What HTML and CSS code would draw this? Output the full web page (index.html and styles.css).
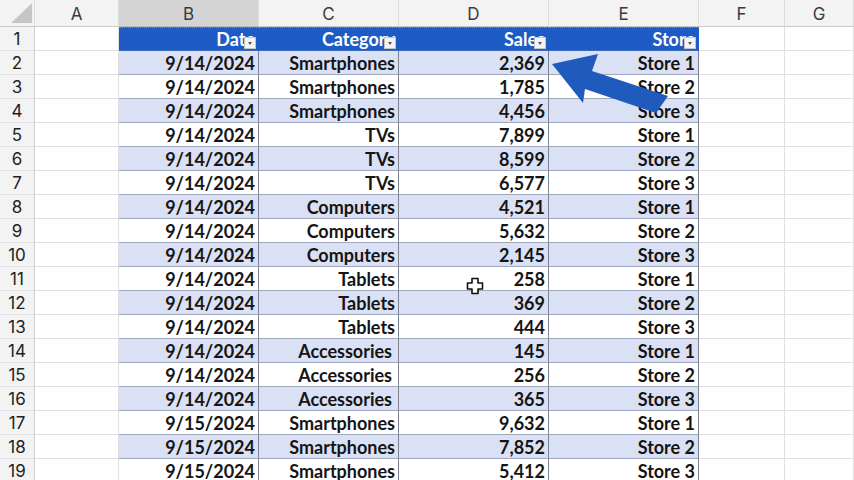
FILE: index.html
```html
<!DOCTYPE html>
<html>
<head>
<meta charset="utf-8">
<link rel="stylesheet" href="styles.css">
</head>
<body>
<div class="sheet">
  <div class="row colhead">
    <div class="corner"><span class="tri"></span></div>
    <div class="ch">A</div>
    <div class="ch sel">B</div>
    <div class="ch">C</div>
    <div class="ch">D</div>
    <div class="ch">E</div>
    <div class="ch">F</div>
    <div class="ch">G</div>
  </div>
  <div class="row">
    <div class="rn">1</div><div class="c"></div>
    <div class="c th">Date<span class="fb"></span></div>
    <div class="c th">Category<span class="fb"></span></div>
    <div class="c th">Sales<span class="fb"></span></div>
    <div class="c th last">Store<span class="fb"></span></div>
    <div class="c"></div><div class="c"></div>
  </div>
  <div class="row band"><div class="rn">2</div><div class="c"></div><div class="c t">9/14/2024</div><div class="c t">Smartphones</div><div class="c t">2,369</div><div class="c t last">Store 1</div><div class="c"></div><div class="c"></div></div>
  <div class="row"><div class="rn">3</div><div class="c"></div><div class="c t">9/14/2024</div><div class="c t">Smartphones</div><div class="c t">1,785</div><div class="c t last">Store 2</div><div class="c"></div><div class="c"></div></div>
  <div class="row band"><div class="rn">4</div><div class="c"></div><div class="c t">9/14/2024</div><div class="c t">Smartphones</div><div class="c t">4,456</div><div class="c t last">Store 3</div><div class="c"></div><div class="c"></div></div>
  <div class="row"><div class="rn">5</div><div class="c"></div><div class="c t">9/14/2024</div><div class="c t">TVs</div><div class="c t">7,899</div><div class="c t last">Store 1</div><div class="c"></div><div class="c"></div></div>
  <div class="row band"><div class="rn">6</div><div class="c"></div><div class="c t">9/14/2024</div><div class="c t">TVs</div><div class="c t">8,599</div><div class="c t last">Store 2</div><div class="c"></div><div class="c"></div></div>
  <div class="row"><div class="rn">7</div><div class="c"></div><div class="c t">9/14/2024</div><div class="c t">TVs</div><div class="c t">6,577</div><div class="c t last">Store 3</div><div class="c"></div><div class="c"></div></div>
  <div class="row band"><div class="rn">8</div><div class="c"></div><div class="c t">9/14/2024</div><div class="c t">Computers</div><div class="c t">4,521</div><div class="c t last">Store 1</div><div class="c"></div><div class="c"></div></div>
  <div class="row"><div class="rn">9</div><div class="c"></div><div class="c t">9/14/2024</div><div class="c t">Computers</div><div class="c t">5,632</div><div class="c t last">Store 2</div><div class="c"></div><div class="c"></div></div>
  <div class="row band"><div class="rn">10</div><div class="c"></div><div class="c t">9/14/2024</div><div class="c t">Computers</div><div class="c t">2,145</div><div class="c t last">Store 3</div><div class="c"></div><div class="c"></div></div>
  <div class="row"><div class="rn">11</div><div class="c"></div><div class="c t">9/14/2024</div><div class="c t">Tablets</div><div class="c t">258</div><div class="c t last">Store 1</div><div class="c"></div><div class="c"></div></div>
  <div class="row band"><div class="rn">12</div><div class="c"></div><div class="c t">9/14/2024</div><div class="c t">Tablets</div><div class="c t">369</div><div class="c t last">Store 2</div><div class="c"></div><div class="c"></div></div>
  <div class="row"><div class="rn">13</div><div class="c"></div><div class="c t">9/14/2024</div><div class="c t">Tablets</div><div class="c t">444</div><div class="c t last">Store 3</div><div class="c"></div><div class="c"></div></div>
  <div class="row band"><div class="rn">14</div><div class="c"></div><div class="c t">9/14/2024</div><div class="c t sp">Accessories</div><div class="c t">145</div><div class="c t last">Store 1</div><div class="c"></div><div class="c"></div></div>
  <div class="row"><div class="rn">15</div><div class="c"></div><div class="c t">9/14/2024</div><div class="c t sp">Accessories</div><div class="c t">256</div><div class="c t last">Store 2</div><div class="c"></div><div class="c"></div></div>
  <div class="row band"><div class="rn">16</div><div class="c"></div><div class="c t">9/14/2024</div><div class="c t sp">Accessories</div><div class="c t">365</div><div class="c t last">Store 3</div><div class="c"></div><div class="c"></div></div>
  <div class="row"><div class="rn">17</div><div class="c"></div><div class="c t">9/15/2024</div><div class="c t">Smartphones</div><div class="c t">9,632</div><div class="c t last">Store 1</div><div class="c"></div><div class="c"></div></div>
  <div class="row band"><div class="rn">18</div><div class="c"></div><div class="c t">9/15/2024</div><div class="c t">Smartphones</div><div class="c t">7,852</div><div class="c t last">Store 2</div><div class="c"></div><div class="c"></div></div>
  <div class="row"><div class="rn">19</div><div class="c"></div><div class="c t">9/15/2024</div><div class="c t">Smartphones</div><div class="c t">5,412</div><div class="c t last">Store 3</div><div class="c"></div><div class="c"></div></div>
</div>

<svg class="cursor" width="18" height="18" viewBox="0 0 18 18">
  <path d="M6 1.5 H12 V6 H16.5 V12 H12 V16.5 H6 V12 H1.5 V6 H6 Z" fill="#fff" stroke="#111" stroke-width="1.6" stroke-linejoin="round"/>
</svg>

<svg class="arrow" width="854" height="480" viewBox="0 0 854 480">
  <polygon points="552,64 598,54 592,71 668,96 656,113 585,89 583,103" fill="#1f5bbd"/>
</svg>
</body>
</html>
```

FILE: styles.css
```css
html, body {
  margin: 0;
  padding: 0;
  background: #ffffff;
  overflow: hidden;
}
body {
  width: 854px;
  height: 480px;
  position: relative;
  font-family: "Inter", "Roboto", "Liberation Sans", sans-serif;
}
.sheet {
  display: flex;
  flex-direction: column;
}
.row {
  display: grid;
  grid-template-columns: 35px 84px 140px 140px 150px 150px 86px 69px;
  height: 24px;
}
.row > div {
  box-sizing: border-box;
  border-right: 1px solid #e0e0e0;
  border-bottom: 1px solid #e0e0e0;
  position: relative;
}
.colhead {
  height: 27px;
}
.colhead > div {
  background: #f3f3f3;
  border-right: 1px solid #dcdcdc;
  border-bottom: 1px solid #c9c9c9;
}
.corner .tri {
  position: absolute;
  right: 2px;
  bottom: 3px;
  width: 21px;
  height: 20px;
  background: #c6c6c6;
  clip-path: polygon(100% 0, 100% 100%, 0 100%);
}
.ch {
  display: flex;
  align-items: center;
  justify-content: center;
  font-size: 17px;
  font-weight: 400;
  color: #3a3a3a;
  padding-top: 1px;
}
.colhead > .sel {
  background: #d4d4d4;
  border-bottom-color: #b8b8b8;
}
.row > .rn {
  background: #f3f3f3;
  border-right: 1px solid #d0d0d0;
  border-bottom: 1px solid #e2e2e2;
  display: flex;
  align-items: center;
  justify-content: center;
  font-size: 17px;
  color: #222;
}
.c {
  background: #fff;
}
.t, .th {
  display: flex;
  align-items: center;
  justify-content: flex-end;
  padding-right: 3px;
  font-family: "Lato", "Inter", sans-serif;
  font-size: 18px;
  font-weight: 700;
  color: #151515;
  white-space: nowrap;
  overflow: hidden;
}
.row > .t {
  border-right: 1px solid #7d8190;
  border-bottom: 1px solid #9ea6bd;
}
.band > .t {
  background: #dbe1f4;
}
.t.sp {
  padding-right: 6px;
}
.row > .th {
  background: #1f5bc4;
  color: #ffffff;
  font-weight: 700;
  border-right: 1px solid #1f5bc4;
  border-bottom: 1px solid #3a69c0;
  border-top: 1px dotted #6d8fd6;
}
.fb {
  position: absolute;
  right: 2px;
  bottom: 1px;
  width: 12px;
  height: 12px;
  box-sizing: border-box;
  background: #f4f4f4;
  border: 1px solid #c4c4c4;
}
.fb::after {
  content: "";
  position: absolute;
  left: 3px;
  top: 4px;
  border-left: 2.5px solid transparent;
  border-right: 2.5px solid transparent;
  border-top: 3px solid #555;
}
.cursor {
  position: absolute;
  left: 466px;
  top: 277px;
}
.arrow {
  position: absolute;
  left: 0;
  top: 0;
  pointer-events: none;
}
```
